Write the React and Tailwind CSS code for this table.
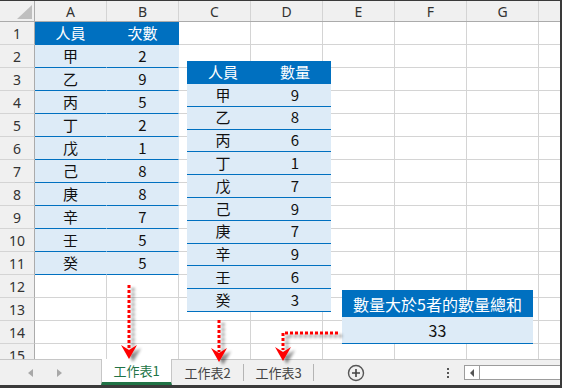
import React from "react";

const cols = ["A", "B", "C", "D", "E", "F", "G"];
const rows = Array.from({ length: 15 }, (_, i) => i + 1);

const first = [
    ["甲", 2], ["乙", 9], ["丙", 5], ["丁", 2], ["戊", 1],
    ["己", 8], ["庚", 8], ["辛", 7], ["壬", 5], ["癸", 5],
];

const second = [
    ["甲", 9], ["乙", 8], ["丙", 6], ["丁", 1], ["戊", 7],
    ["己", 9], ["庚", 7], ["辛", 9], ["壬", 6], ["癸", 3],
];

const cjk = { fontFamily: '"Noto Sans CJK TC", "Noto Sans", sans-serif' };
const ui = { fontFamily: '"Noto Sans", "Liberation Sans", sans-serif' };

/* what goes in a grid cell: only the first table sits on the cells */
function cellInfo(row, colIdx) {
    if (colIdx > 1 || row > 11) return { cls: "border-r-[#d4d4d4] border-b-[#d4d4d4]", text: "" };
    if (row === 1) {
        return {
            cls: "bg-[#0070c0] text-white border-r-[#0070c0] border-b-[#0070c0]",
            text: colIdx === 0 ? "人員" : "次數",
        };
    }
    const item = first[row - 2];
    return {
        cls: "bg-[#ddebf7] text-[#111] border-r-[#ddebf7] border-b-[#0070c0]",
        text: colIdx === 0 ? item[0] : item[1],
    };
}

function Arrows() {
    return (
        <svg
            className="absolute left-0 top-[-1px] pointer-events-none"
            width="562"
            height="388"
            viewBox="0 0 562 388"
        >
            <defs>
                <filter id="sh" x="-50%" y="-50%" width="200%" height="200%">
                    <feDropShadow dx="4" dy="3" stdDeviation="1.8" floodColor="#000" floodOpacity="0.45" />
                </filter>
            </defs>
            <g filter="url(#sh)" fill="none" stroke="#ff0000" strokeWidth="3" strokeDasharray="3 2">
                <path d="M129 285 V350" />
                <path d="M219 320 V352" />
                <path d="M338 333 H283 V350" />
            </g>
            <g filter="url(#sh)" fill="#ff0000">
                <path d="M121 345 L129 359 L137 345 L129 350 Z" />
                <path d="M211 348 L219 362 L227 348 L219 353 Z" />
                <path d="M275 347 L283 361 L291 347 L283 352 Z" />
            </g>
        </svg>
    );
}

function SheetTabs() {
    return (
        <div className="h-[26px] shrink-0 flex items-stretch bg-[#f0f0f0] border-t border-[#c6c6c6] text-[13px]" style={cjk}>
            <div className="w-[101px] flex items-center">
                <span className="ml-[28px] w-0 h-0 border-y-[4px] border-y-transparent border-r-[5px] border-r-[#a8a8a8]" />
                <span className="ml-[24px] w-0 h-0 border-y-[4px] border-y-transparent border-l-[5px] border-l-[#a8a8a8]" />
            </div>
            <div className="w-[71px] bg-white border-x border-[#c6c6c6] border-b-[3px] border-b-[#217346] flex items-center justify-center text-[#217346] -mt-px pt-px">
                工作表1
            </div>
            <div className="w-[71px] flex items-center justify-center text-[#444]">工作表2</div>
            <div className="w-px my-[4px] bg-[#b4b4b4]" />
            <div className="w-[69px] flex items-center justify-center text-[#444]">工作表3</div>
            <div className="w-px my-[4px] bg-[#b4b4b4]" />
            <div className="w-[84px] flex items-center justify-center">
                <svg width="18" height="18" viewBox="0 0 18 18">
                    <circle cx="9" cy="9" r="7.5" fill="none" stroke="#555" strokeWidth="1.4" />
                    <path d="M9 5 V13 M5 9 H13" stroke="#444" strokeWidth="1.6" />
                </svg>
            </div>
            <div className="w-[66px] flex flex-col items-start justify-center gap-[2px] pl-[49px]">
                <span className="w-[2px] h-[2px] bg-[#555]" />
                <span className="w-[2px] h-[2px] bg-[#555]" />
                <span className="w-[2px] h-[2px] bg-[#555]" />
            </div>
            <div className="flex-1 flex items-center">
                <div className="h-[15px] w-full flex bg-white border-y border-l border-[#9c9c9c]">
                    <div className="w-[15px] border-r border-[#9c9c9c] flex items-center justify-center">
                        <span className="w-0 h-0 border-y-[4px] border-y-transparent border-r-[4px] border-r-[#555]" />
                    </div>
                </div>
            </div>
        </div>
    );
}

export default function App() {
    return (
        <div className="w-[562px] h-[388px] relative overflow-hidden bg-white border-t border-r-2 border-b-[3px] border-[#3a3a3a] flex flex-col">
            <div className="flex-1 overflow-hidden flex flex-col">
                {/* column letters */}
                <div className="h-[21px] shrink-0 flex bg-[#f0f0f0] border-b border-[#ababab] text-[14px] text-[#333]" style={ui}>
                    <div className="w-[35px] shrink-0 border-r border-[#ababab] relative">
                        <svg className="absolute left-[17px] top-[4px]" width="15" height="14" viewBox="0 0 15 14">
                            <path d="M15 0 V14 H0 Z" fill="#bfbfbf" />
                        </svg>
                    </div>
                    {cols.map((c) => (
                        <div key={c} className="w-[72px] shrink-0 border-r border-[#d4d4d4] flex items-center justify-center">
                            {c}
                        </div>
                    ))}
                    <div className="flex-1" />
                </div>

                {rows.map((r) => (
                    <div key={r} className="h-[23px] shrink-0 flex">
                        <div
                            className="w-[35px] shrink-0 bg-[#f0f0f0] border-r border-r-[#ababab] border-b border-b-[#d4d4d4] flex items-center justify-center text-[14px] text-[#333]"
                            style={ui}
                        >
                            {r}
                        </div>
                        {cols.map((c, i) => {
                            const { cls, text } = cellInfo(r, i);
                            return (
                                <div
                                    key={c}
                                    className={`w-[72px] shrink-0 border-r border-b flex items-center justify-center text-[15px] ${cls}`}
                                    style={cjk}
                                >
                                    {text}
                                </div>
                            );
                        })}
                        <div className="flex-1 border-b border-[#d4d4d4]" />
                    </div>
                ))}
            </div>

            <SheetTabs />

            {/* floating table 2 */}
            <div className="absolute left-[187px] top-[60px] w-[144px] text-[15px]" style={cjk}>
                <div className="h-[23px] flex bg-[#0070c0] text-white">
                    <div className="w-[72px] flex items-center justify-center">人員</div>
                    <div className="w-[72px] flex items-center justify-center">數量</div>
                </div>
                {second.map(([n, v]) => (
                    <div key={n} className="h-[22.8px] flex bg-[#ddebf7] border-b border-[#0070c0] text-[#111]">
                        <div className="w-[72px] flex items-center justify-center">{n}</div>
                        <div className="w-[72px] flex items-center justify-center">{v}</div>
                    </div>
                ))}
            </div>

            {/* floating result box */}
            <div className="absolute left-[342px] top-[289px] w-[191px]" style={cjk}>
                <div className="h-[27px] bg-[#0070c0] text-white text-[16px] flex items-center justify-center">
                    數量大於5者的數量總和
                </div>
                <div className="h-[27px] bg-[#ddebf7] border-b border-[#0070c0] text-[#111] text-[16px] flex items-center justify-center">
                    33
                </div>
            </div>

            <Arrows />
        </div>
    );
}
